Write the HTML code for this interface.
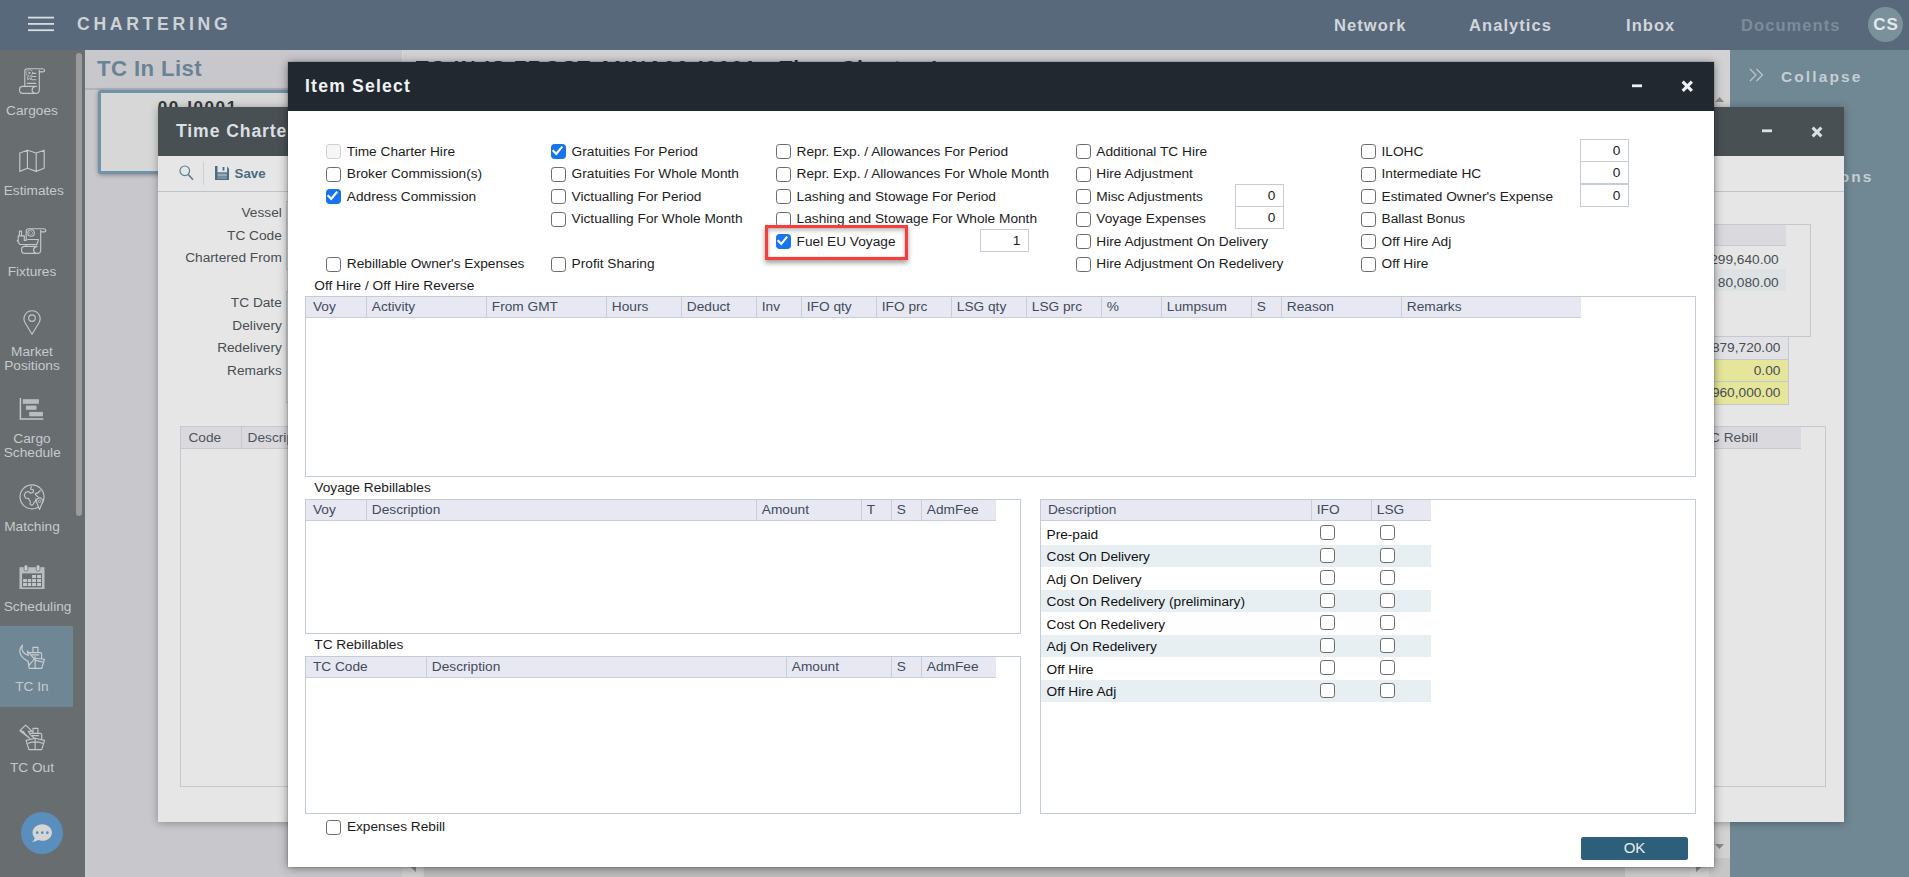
<!DOCTYPE html>
<html lang="en">
<head>
<meta charset="utf-8">
<title>Chartering - Item Select</title>
<style>
*{box-sizing:border-box;margin:0;padding:0}
html,body{width:1909px;height:877px;overflow:hidden}
body{position:relative;font-family:"Liberation Sans",Arial,sans-serif;font-size:13.7px;color:#1a1a1a;background:#c8c8cc}
.abs{position:absolute}
/* ---------- top bar ---------- */
#topbar{position:absolute;left:0;top:0;width:1909px;height:50px;background:#58697b}
#topbar .brand{position:absolute;left:77px;top:13px;font-weight:bold;font-size:17.6px;letter-spacing:3.7px;color:#ced2d7;line-height:22px;white-space:nowrap}
#topbar .nav{position:absolute;top:14px;font-weight:bold;font-size:16.5px;letter-spacing:1.07px;color:#d2d6db;line-height:22px;white-space:nowrap}
#topbar .nav.dim{color:#7d8c9b}
#avatar{position:absolute;left:1868px;top:7px;width:35px;height:35px;border-radius:50%;background:#7a919c;color:#e3e8ec;font-weight:bold;font-size:17px;letter-spacing:1px;text-align:center;line-height:35px;padding-left:1px}
/* ---------- sidebar ---------- */
#sidebar{position:absolute;left:0;top:50px;width:84.7px;height:827px;background:#686d70}
#sidebar .sel{position:absolute;left:0;top:576px;width:73px;height:81px;background:#6f8795}
#sidebar .lbl{position:absolute;left:3.7px;width:56.6px;text-align:center;color:#c6cacd;font-size:13.7px;line-height:13.8px;white-space:nowrap}
#sidebar svg{position:absolute;overflow:visible}
#sidebar .thumb{position:absolute;left:76.3px;top:2.7px;width:5.8px;height:463px;border-radius:3px;background:#9b9b9b}
#chat{position:absolute;left:20.85px;top:761.55px;width:42.5px;height:42.5px;border-radius:50%;background:#5a8fbd}
/* ---------- background page ---------- */
#listpane{position:absolute;left:84.7px;top:50px;width:317.3px;height:827px;background:#c8c8cc}
#listpane h2{position:absolute;left:12.3px;top:5.5px;font-size:22.2px;letter-spacing:.4px;color:#698395;font-weight:bold;line-height:26px;white-space:nowrap}
#listpane .hr{position:absolute;left:0;top:38.2px;width:317.3px;height:1.6px;background:#b2b3b8}
#card{position:absolute;left:98px;top:90px;width:400px;height:83.5px;border:3px solid #7193a8;border-radius:3px;background:#d7d7d7;box-shadow:0 1px 4px rgba(0,0,0,.35)}
#card b{position:absolute;left:56.8px;top:5.4px;font-size:17px;letter-spacing:1.6px;color:#33383c;line-height:20px}
#detail{position:absolute;left:402px;top:50px;width:1328px;height:827px;background:#d2d2d4;border-left:1px solid #d9d9dc}
#detail h1{position:absolute;left:12.7px;top:3.3px;font-size:21px;font-weight:bold;letter-spacing:1.3px;color:#2c3236;line-height:30px;white-space:nowrap}
#vscroll{position:absolute;left:1711.3px;top:88.6px;width:18.7px;height:769px;background:#d2d2d2}
#hscroll{position:absolute;left:402px;top:858.3px;width:1307.3px;height:18.7px;background:#cbcbcb}
#rightpane{position:absolute;left:1730px;top:50px;width:179px;height:827px;background:#708894}
#rightpane .t{position:absolute;font-weight:bold;font-size:15.5px;letter-spacing:2.1px;color:#c4ced4;line-height:20px;white-space:nowrap}
/* ---------- Time Charter dialog (behind) ---------- */
#tc{position:absolute;left:158px;top:107.2px;width:1686.3px;height:714.6px;background:#e6e6e6;box-shadow:0 1px 8px rgba(0,0,0,.32)}
#tc .hd{position:absolute;left:0;top:0;width:100%;height:48.4px;background:#495054}
#tc .hd .ttl{position:absolute;left:18px;top:13px;font-weight:bold;font-size:17.6px;letter-spacing:.9px;color:#dcdfe3;line-height:22px;white-space:nowrap}
#tc .tb{position:absolute;left:0;top:48.4px;width:100%;height:36px;border-bottom:1px solid #bcc3c9}
#tc .fl{position:absolute;right:1562.5px;white-space:nowrap;color:#494e53;line-height:16px}
#tc .box{position:absolute;border:1px solid #c3c9d2}
#tc .th{position:absolute;background:#d9d9de;color:#4f545c;line-height:21px;height:22px;border-bottom:1px solid #c6c9d2}
#tc .num{position:absolute;text-align:right;color:#494e53;line-height:21.5px;height:22.5px;padding-right:8px}
/* ---------- Item Select dialog ---------- */
#dlg{position:absolute;left:288px;top:62px;width:1426.3px;height:805.4px;background:#fff;box-shadow:0 0 1px rgba(0,0,0,.5),0 1px 9px rgba(0,0,0,.45)}
#dlg .hd{position:absolute;left:0;top:0;width:100%;height:48.5px;background:#21282f}
#dlg .hd .ttl{position:absolute;left:17px;top:12.6px;font-weight:bold;font-size:17.6px;letter-spacing:1.2px;color:#f1f2f4;line-height:22px;white-space:nowrap}
.cb{position:absolute;width:15px;height:15px;border:1.6px solid #6b6b6b;border-radius:3.2px;background:#fff}
.cb.on{background:#1574ee;border-color:#1574ee}
.cb.dis{border-color:#cfcfcf;background:#f6f6f6}
.cb svg{position:absolute;left:-1.6px;top:-1.6px;width:15px;height:15px}
.ck{position:absolute;white-space:nowrap;line-height:16px;color:#1c1c1c}
.nb{position:absolute;width:49px;height:23px;border:1px solid #c5ccd6;background:#fff;text-align:right;padding-right:7.6px;line-height:21px;font-size:13.7px;color:#1c1c1c}
.grid{position:absolute;border:1px solid #c3cbd6;background:#fff}
.gh{position:absolute;top:0;height:21px;background:#e8e8f2;border-bottom:1px solid #c9cdd9;border-right:1px solid #c9cdd9;color:#414b5a;line-height:20px;padding-left:5px;white-space:nowrap;overflow:hidden}
.gh.f{padding-left:6.9px}
.gh.l{border-right:0}
.gl{position:absolute;white-space:nowrap;line-height:16px;color:#1c1c1c}
.row{position:absolute;left:0;width:390px;height:22.5px}
.row.alt{background:#e8eff3}
.row span{position:absolute;left:5.5px;top:4.3px;line-height:16px;color:#111;white-space:nowrap}
#ok{position:absolute;left:1293px;top:775px;width:107px;height:23px;border-radius:2.5px;background:#2d5f7b;color:#e6edf1;text-align:center;font-size:15px;line-height:21px}
#hl{position:absolute;left:477px;top:163px;width:143px;height:35px;border:3px solid #f83d3d;background:#fff;box-shadow:0 3px 5px rgba(0,0,0,.38),inset 0 3px 4px rgba(0,0,0,.22),inset 1px 0 2px rgba(0,0,0,.12),inset -1px 0 2px rgba(0,0,0,.12)}
</style>
</head>
<body>

<!-- ================= TOP BAR ================= -->
<div id="topbar">
  <svg class="abs" style="left:28px;top:16px" width="26" height="16" viewBox="0 0 26 16"><g fill="#d8dde2"><rect x="0" y="0.7" width="26" height="1.8"/><rect x="0" y="7" width="26" height="1.8"/><rect x="0" y="13.3" width="26" height="1.8"/></g></svg>
  <div class="brand">CHARTERING</div>
  <div class="nav" style="left:1334px">Network</div>
  <div class="nav" style="left:1469px">Analytics</div>
  <div class="nav" style="left:1626px">Inbox</div>
  <div class="nav dim" style="left:1741px">Documents</div>
  <div id="avatar">CS</div>
</div>

<!-- ================= SIDEBAR ================= -->
<div id="sidebar">
  <div class="sel"></div>
  <div class="thumb"></div>
  <!--SIDEBAR-ICONS-->
  <svg class="abs" style="left:0;top:0" width="85" height="827" viewBox="0 50 85 827">
    <path d="M24.8 86.2 L24.8 71.0 Q24.8 68.7 27.2 68.7 L42.6 68.7 Q44.6 68.8 44.6 70.4 Q44.6 71.9 42.6 71.9 L39.3 71.9 M39.3 70.2 L39.3 89.9 Q39.3 93.4 35.8 93.4 L22.7 93.4 Q19.5 93.4 19.5 89.8 Q19.5 86.3 22.7 86.3 L36.6 86.3 M35.4 86.5 Q32.1 87.1 32.1 89.9 Q32.1 92.8 35.4 93.3 M33.4 73.3 L35.8 73.3 M32.5 76.5 L35.8 76.5 M32.1 79.7 L35.8 79.7 M27.4 83.4 L35.8 83.4" fill="none" stroke="#c3c7ca" stroke-width="1.15" stroke-linejoin="round" stroke-linecap="round"/>
    <circle cx="29.5" cy="72.9" r="3.1" fill="none" stroke="#c3c7ca" stroke-width="1.1" stroke-dasharray="1.1 0.7"/>
    <circle cx="29.5" cy="72.9" r="1.1" fill="#c3c7ca"/>
    <path d="M27.8 76.2 L27.8 79.9 L29.5 78.4 L31.1 79.9 L31.1 76.2" fill="none" stroke="#c3c7ca" stroke-width="1"/>
    <path d="M19.8 153.0 L27.4 150.2 L36.2 153.0 L44.2 150.2 L44.2 168.3 L36.2 171.4 L27.4 168.3 L19.8 171.4 Z M27.4 150.2 L27.4 168.3 M36.2 153.0 L36.2 171.4" fill="none" stroke="#c3c7ca" stroke-width="1.15" stroke-linejoin="round" stroke-linecap="round"/>
    <path d="M26.2 240.1 L26.2 231.0 Q26.2 228.7 28.6 228.7 L43.6 228.7 Q45.8 228.8 45.8 230.4 Q45.8 231.9 43.6 231.9 L40.7 231.9 M40.7 230.2 L40.7 249.9 Q40.7 253.4 37.3 253.4 L24.7 253.4 Q21.5 253.4 21.5 249.8 Q21.5 246.4 24.7 246.4 L37.1 246.4 M36.6 246.6 Q33.6 247.1 33.6 249.9 Q33.6 252.8 36.6 253.3 M19.4 235.6 L19.4 231.1 L21.5 231.1 L21.5 235.6 M18.2 240.5 L18.2 235.8 L24.3 235.8 L24.3 240.4 L26.2 240.4 M27.8 239.5 L38.5 239.5 L36.8 244.5 L19.8 244.5 L17.3 240.6 M26.2 244.5 L26.2 246.2" fill="none" stroke="#c3c7ca" stroke-width="1.15" stroke-linejoin="round" stroke-linecap="round"/>
    <circle cx="31.1" cy="233.0" r="3.3" fill="none" stroke="#c3c7ca" stroke-width="1.1"/>
    <circle cx="31.1" cy="233.0" r="1.5" fill="none" stroke="#c3c7ca" stroke-width="0.9" stroke-dasharray="0.9 0.6"/>
    <path d="M32.0 334.3 L25.1 322.7 A8.0 8.0 0 1 1 39.0 322.7 Z" fill="none" stroke="#c3c7ca" stroke-width="1.15" stroke-linejoin="round" stroke-linecap="round"/>
    <circle cx="32.0" cy="318.1" r="3.3" fill="none" stroke="#c3c7ca" stroke-width="1.15"/>
    <path d="M20.4 397.9 V419.0 H43.4" fill="none" stroke="#c3c7ca" stroke-width="1.5"/>
    <rect x="22.8" y="399.2" width="16.1" height="4.6" fill="#b9bdc1"/>
    <rect x="25.9" y="405.6" width="10.6" height="4.2" fill="#b9bdc1"/>
    <rect x="29.2" y="411.9" width="13.7" height="4.4" fill="#b9bdc1"/>
    <circle cx="32" cy="496.8" r="12" fill="none" stroke="#c3c7ca" stroke-width="1.15" stroke-linejoin="round" stroke-linecap="round"/>
    <path d="M31.3 486.6 L30.6 489.3 L33.4 489.8 L33.4 492.1 L30.7 493.3 L28.4 491.5 L25.6 492.2 L24.3 495.4 L25.6 498.0 L28.4 498.4 L30.2 501.2 L30.1 504.1 L31.7 505.4 L33.4 504.1 L34.2 502.1 L35.5 501.2 L36.0 498.7" fill="none" stroke="#c3c7ca" stroke-width="1.15" stroke-linejoin="round" stroke-linecap="round"/>
    <path d="M40.3 490.5 L38.3 492.6 L35.1 493.9 L36.2 495.5 L38.3 497.1" fill="none" stroke="#c3c7ca" stroke-width="1.15" stroke-linejoin="round" stroke-linecap="round"/>
    <path d="M39.5 509.5 L37.0 503.2 A3.2 3.2 0 1 1 42.1 503.2 Z" fill="#686d70" stroke="#c3c7ca" stroke-width="1.1" stroke-linejoin="round"/>
    <circle cx="39.5" cy="501.4" r="1.2" fill="none" stroke="#c3c7ca" stroke-width="0.9"/>
    <rect x="19.5" y="567.2" width="25.0" height="21.8" fill="#b9bdc1"/>
    <rect x="22.1" y="573.4" width="19.9" height="14.0" fill="#686d70"/>
    <rect x="24.1" y="565.0" width="3.7" height="6.0" rx="1.4" fill="#c9cdd0" stroke="#686d70" stroke-width="0.8"/>
    <rect x="36.2" y="565.0" width="3.7" height="6.0" rx="1.4" fill="#c9cdd0" stroke="#686d70" stroke-width="0.8"/>
    <rect x="32.1" y="575.0" width="3.9" height="3.1" fill="#c3c7ca"/>
    <rect x="37.1" y="575.0" width="3.9" height="3.1" fill="#c3c7ca"/>
    <rect x="23.1" y="579.1" width="3.8" height="3.0" fill="#c3c7ca"/>
    <rect x="27.8" y="579.1" width="3.4" height="3.0" fill="#c3c7ca"/>
    <rect x="32.1" y="579.1" width="3.9" height="3.0" fill="#c3c7ca"/>
    <rect x="37.1" y="579.1" width="3.9" height="3.0" fill="#c3c7ca"/>
    <rect x="23.1" y="583.0" width="3.8" height="3.1" fill="#c3c7ca"/>
    <rect x="27.8" y="583.0" width="3.4" height="3.1" fill="#c3c7ca"/>
    <rect x="32.1" y="583.0" width="3.9" height="3.1" fill="#c3c7ca"/>
    <rect x="37.1" y="583.0" width="3.9" height="3.1" fill="#c3c7ca"/>
    <path d="M22.5 645.2 C16.9 650.9 20.6 657.5 28.2 661.5 L29.0 665.3 L34.4 659.0 L27.5 651.2 L28.2 655.5 C24.3 654.2 20.8 650.9 22.5 645.2 Z M33.0 652.1 L33.0 647.3 L37.9 647.3 L37.9 652.1 M30.1 652.6 L40.3 652.6 Q41.7 652.6 41.7 654.0 L41.7 658.3 M32.1 654.9 L38.7 654.9 M35.1 658.3 L44.5 659.2 L41.7 668.4 L29.2 668.4 L28.1 662.0 M35.1 656.2 L35.1 668.2 M35.8 660.4 L42.6 662.0" fill="none" stroke="#c9cdd0" stroke-width="1.15" stroke-linejoin="round" stroke-linecap="round"/>
    <path d="M19.9 730.7 L25.6 725.2 L32.0 731.2 L28.4 731.4 C29.2 733.8 31.3 736.2 33.8 737.7 M29.7 738.2 C26.8 736.2 24.3 733.8 23.0 731.3 L19.9 730.7 Z M33.0 733.0 L33.0 728.4 L37.9 728.4 L37.9 733.0 M30.7 733.4 L40.3 733.4 Q41.7 733.4 41.7 734.8 L41.7 739.1 M32.1 735.6 L38.7 735.6 M26.0 740.4 L35.1 738.3 L44.6 740.4 L41.7 749.6 L28.9 749.6 L26.0 740.4 M35.1 738.5 L35.1 749.4 M28.2 743.3 Q35.1 740.4 42.6 743.3" fill="none" stroke="#c3c7ca" stroke-width="1.15" stroke-linejoin="round" stroke-linecap="round"/>
  </svg>
  <!--/SIDEBAR-ICONS-->
  <div class="lbl" style="top:53.9px">Cargoes</div>
  <div class="lbl" style="top:133.9px">Estimates</div>
  <div class="lbl" style="top:214.9px">Fixtures</div>
  <div class="lbl" style="top:295.2px">Market<br>Positions</div>
  <div class="lbl" style="top:382.2px">Cargo<br>Schedule</div>
  <div class="lbl" style="top:469.7px">Matching</div>
  <div class="lbl" style="top:549.7px">Scheduling</div>
  <div class="lbl" style="top:629.7px">TC In</div>
  <div class="lbl" style="top:710.7px">TC Out</div>
  <div id="chat"><svg class="abs" style="left:0;top:0" width="42.5" height="42.5" viewBox="20.85 811.55 42.5 42.5"><path d="M42.1 823.8c5.4 0 9.7 3.7 9.7 8.3s-4.3 8.3-9.7 8.3c-1.5 0-2.9-.3-4.200-.8c-1.500 1.100-3.600 1.800-5.900 2.100c1.300-1.200 2.200-2.600 2.600-4.200c-1.400-1.400-2.200-3.300-2.200-5.400c0-4.600 4.300-8.300 9.700-8.300z" fill="#d4d6d6"/><circle cx="37" cy="832.2" r="1.35" fill="#5a8fbd"/><circle cx="42.1" cy="832.2" r="1.35" fill="#5a8fbd"/><circle cx="47.2" cy="832.2" r="1.35" fill="#5a8fbd"/></svg></div>
</div>

<!-- ================= BACKGROUND PAGE ================= -->
<div id="listpane">
  <h2>TC In List</h2>
  <div class="hr"></div>
</div>
<div id="detail"><h1>TC IN IS FROST ANNA00-I0001 : Time Charter In</h1></div>
<div id="card"><b>00-I0001</b></div>
<div id="vscroll">
  <svg class="abs" style="left:3.6px;top:8.8px" width="9" height="5" viewBox="0 0 9 5"><path d="M0 5L4.5 0L9 5z" fill="#8a8a8a"/></svg>
  <svg class="abs" style="left:3.7px;top:755.8px" width="9" height="5" viewBox="0 0 9 5"><path d="M0 0L4.5 5L9 0z" fill="#8a8a8a"/></svg>
</div>
<div id="hscroll">
  <div class="abs" style="left:0;top:0;width:19px;height:18.7px;background:#d0d0d0"></div>
  <svg class="abs" style="left:9px;top:5px" width="5" height="9" viewBox="0 0 5 9"><path d="M5 0L0 4.5L5 9z" fill="#8a8a8a"/></svg>
  <div class="abs" style="left:22px;top:0;width:1201px;height:18.7px;background:#bcbcbc"></div>
  <div class="abs" style="left:1288px;top:0;width:19.3px;height:18.7px;background:#d0d0d0"></div>
  <svg class="abs" style="left:1294.2px;top:5.2px" width="5" height="9" viewBox="0 0 5 9"><path d="M0 0L5 4.5L0 9z" fill="#8a8a8a"/></svg>
</div>
<div class="abs" style="left:1709.3px;top:857.6px;width:20.7px;height:19.4px;background:#c6c6c6"></div>
<div id="rightpane">
  <svg class="abs" style="left:18.5px;top:18px" width="15" height="14" viewBox="0 0 15 14"><path d="M1 1L7 7L1 13M7.5 1L13.5 7L7.5 13" fill="none" stroke="#bfcad1" stroke-width="1.1"/></svg>
  <div class="t" style="left:51px;top:17px">Collapse</div>
  <div class="t" style="left:72px;top:117px">Actions</div>
</div>

<!-- ================= TIME CHARTER DIALOG ================= -->
<div id="tc">
  <div class="hd"><div class="ttl">Time Charter In</div></div>
  <div class="tb"></div>
  <!--TC-BODY-->
  <svg class="abs" style="left:1603.8px;top:22px" width="10" height="4" viewBox="0 0 10 4"><rect x="0" y="0.4" width="10" height="2.8" fill="#dcdfe3"/></svg>
  <svg class="abs" style="left:1652.8px;top:18.4px" width="12" height="12" viewBox="0 0 12 12"><path d="M1.6 1.6L10.4 10.4M10.4 1.6L1.6 10.4" stroke="#dcdfe3" stroke-width="3" fill="none"/></svg>
  <svg class="abs" style="left:21px;top:58px" width="15" height="16" viewBox="0 0 15 16"><circle cx="5.8" cy="5.8" r="4.8" fill="none" stroke="#5c7d94" stroke-width="1.2"/><path d="M9.3 9.6L14 14.8" stroke="#5c7d94" stroke-width="1.6" fill="none"/></svg>
  <div class="abs" style="left:45px;top:55px;width:1px;height:23px;background:#cbd0d4"></div>
  <svg class="abs" style="left:56.9px;top:58.8px" width="14" height="14" viewBox="0 0 14 14"><path d="M0 0h11.6l2.4 2.4v11.6H0z" fill="#4b6d86"/><rect x="2.5" y="0" width="9.6" height="6.3" fill="#e6e6e6"/><rect x="7.6" y="1" width="1.8" height="3.6" fill="#4b6d86"/><rect x="2.5" y="7.6" width="9.3" height="2.7" fill="#98aab8"/><rect x="2.5" y="10.3" width="9.3" height="2.7" fill="#7a8fa0"/></svg>
  <div class="abs" style="left:76.6px;top:58.9px;font-weight:bold;color:#4a6b82;font-size:13.3px;line-height:16px">Save</div>
  <div class="fl" style="top:97.7px">Vessel</div>
  <div class="fl" style="top:120.5px">TC Code</div>
  <div class="fl" style="top:143px">Chartered From</div>
  <div class="fl" style="top:187.5px">TC Date</div>
  <div class="fl" style="top:210.5px">Delivery</div>
  <div class="fl" style="top:233px">Redelivery</div>
  <div class="fl" style="top:255.5px">Remarks</div>
  <div class="abs" style="left:127.5px;top:94.3px;width:400px;height:68.2px;border:1px solid #c3c9d2;background:#eaeaea"></div>
  <div class="abs" style="left:127.5px;top:183.4px;width:400px;height:112.7px;border:1px solid #c3c9d2;background:#eaeaea"></div>
  <div class="box" style="left:22.4px;top:319.1px;width:1645.4px;height:360.3px"></div>
  <div class="th" style="left:23.4px;top:320.1px;width:60.6px;padding-left:7px;border-right:1px solid #c6c9d2">Code</div>
  <div class="th" style="left:84px;top:320.1px;width:1559.2px;padding-left:5.6px">Description</div>
  <div class="th" style="left:1520px;top:320.1px;width:123.2px;padding-left:22.7px;border-left:1px solid #c6c9d2">TC Rebill</div>
  <div class="box" style="left:1400px;top:117.1px;width:252.6px;height:113px"></div>
  <div class="th" style="left:1401px;top:118.1px;width:227px;height:20.5px"></div>
  <div class="num" style="left:1401.7px;top:142px;width:227px">299,640.00</div>
  <div class="abs" style="left:1401px;top:162.3px;width:227px;height:22px;background:#dde2e5"></div>
  <div class="num" style="left:1401.7px;top:164.7px;width:227px">80,080.00</div>
  <div class="num" style="left:1400px;top:229.1px;width:230.7px;border:1px solid #c3c9d2;background:#e2e2e6;height:23.5px;padding-right:7.3px">879,720.00</div>
  <div class="num" style="left:1400px;top:251.6px;width:230.7px;border:1px solid #c3c9d2;background:#e6e69b;height:23.5px;padding-right:7.3px">0.00</div>
  <div class="num" style="left:1400px;top:274.1px;width:230.7px;border:1px solid #c3c9d2;background:#e6e69b;height:23.5px;padding-right:7.3px">960,000.00</div>
  <!--/TC-BODY-->
</div>

<!-- ================= ITEM SELECT DIALOG ================= -->
<div id="dlg">
  <div class="hd"><div class="ttl">Item Select</div></div>
  <!--DLG-BODY-->
  <svg class="abs" style="left:1344px;top:21.5px" width="10" height="4" viewBox="0 0 10 4"><rect x="0" y="0.4" width="10" height="2.8" fill="#eef0f2"/></svg>
  <svg class="abs" style="left:1392.5px;top:18.3px" width="12.6" height="12.6" viewBox="0 0 12 12"><path d="M1.6 1.6L10.4 10.4M10.4 1.6L1.6 10.4" stroke="#eef0f2" stroke-width="3" stroke-linecap="butt" fill="none"/></svg>
  <div class="cb dis" style="left:38px;top:82px"></div>
  <div class="ck" style="left:58.8px;top:81.7px">Time Charter Hire</div>
  <div class="cb" style="left:38px;top:105px"></div>
  <div class="ck" style="left:58.8px;top:104.2px">Broker Commission(s)</div>
  <div class="cb on" style="left:38px;top:127px"><svg viewBox="0 0 14 14"><path d="M3.2 7.4l2.6 2.7 5-6" fill="none" stroke="#fff" stroke-width="2" stroke-linecap="square"/></svg></div>
  <div class="ck" style="left:58.8px;top:126.7px">Address Commission</div>
  <div class="cb" style="left:38px;top:195px"></div>
  <div class="ck" style="left:58.8px;top:194.2px">Rebillable Owner's Expenses</div>
  <div class="cb on" style="left:263px;top:82px"><svg viewBox="0 0 14 14"><path d="M3.2 7.4l2.6 2.7 5-6" fill="none" stroke="#fff" stroke-width="2" stroke-linecap="square"/></svg></div>
  <div class="ck" style="left:283.6px;top:81.7px">Gratuities For Period</div>
  <div class="cb" style="left:263px;top:105px"></div>
  <div class="ck" style="left:283.6px;top:104.2px">Gratuities For Whole Month</div>
  <div class="cb" style="left:263px;top:127px"></div>
  <div class="ck" style="left:283.6px;top:126.7px">Victualling For Period</div>
  <div class="cb" style="left:263px;top:150px"></div>
  <div class="ck" style="left:283.6px;top:149.2px">Victualling For Whole Month</div>
  <div class="cb" style="left:263px;top:195px"></div>
  <div class="ck" style="left:283.6px;top:194.2px">Profit Sharing</div>
  <div class="cb" style="left:488px;top:82px"></div>
  <div class="ck" style="left:508.6px;top:81.7px">Repr. Exp. / Allowances For Period</div>
  <div class="cb" style="left:488px;top:105px"></div>
  <div class="ck" style="left:508.6px;top:104.2px">Repr. Exp. / Allowances For Whole Month</div>
  <div class="cb" style="left:488px;top:127px"></div>
  <div class="ck" style="left:508.6px;top:126.7px">Lashing and Stowage For Period</div>
  <div class="cb" style="left:488px;top:150px"></div>
  <div class="ck" style="left:508.6px;top:149.2px">Lashing and Stowage For Whole Month</div>
  <div id="hl"></div>
  <div class="cb on" style="left:488px;top:172px"><svg viewBox="0 0 14 14"><path d="M3.2 7.4l2.6 2.7 5-6" fill="none" stroke="#fff" stroke-width="2" stroke-linecap="square"/></svg></div>
  <div class="ck" style="left:508.6px;top:171.7px">Fuel EU Voyage</div>
  <div class="cb" style="left:788px;top:82px"></div>
  <div class="ck" style="left:808.3px;top:81.7px">Additional TC Hire</div>
  <div class="cb" style="left:788px;top:105px"></div>
  <div class="ck" style="left:808.3px;top:104.2px">Hire Adjustment</div>
  <div class="cb" style="left:788px;top:127px"></div>
  <div class="ck" style="left:808.3px;top:126.7px">Misc Adjustments</div>
  <div class="cb" style="left:788px;top:150px"></div>
  <div class="ck" style="left:808.3px;top:149.2px">Voyage Expenses</div>
  <div class="cb" style="left:788px;top:172px"></div>
  <div class="ck" style="left:808.3px;top:171.7px">Hire Adjustment On Delivery</div>
  <div class="cb" style="left:788px;top:195px"></div>
  <div class="ck" style="left:808.3px;top:194.2px">Hire Adjustment On Redelivery</div>
  <div class="cb" style="left:1073px;top:82px"></div>
  <div class="ck" style="left:1093.5px;top:81.7px">ILOHC</div>
  <div class="cb" style="left:1073px;top:105px"></div>
  <div class="ck" style="left:1093.5px;top:104.2px">Intermediate HC</div>
  <div class="cb" style="left:1073px;top:127px"></div>
  <div class="ck" style="left:1093.5px;top:126.7px">Estimated Owner's Expense</div>
  <div class="cb" style="left:1073px;top:150px"></div>
  <div class="ck" style="left:1093.5px;top:149.2px">Ballast Bonus</div>
  <div class="cb" style="left:1073px;top:172px"></div>
  <div class="ck" style="left:1093.5px;top:171.7px">Off Hire Adj</div>
  <div class="cb" style="left:1073px;top:195px"></div>
  <div class="ck" style="left:1093.5px;top:194.2px">Off Hire</div>
  <div class="nb" style="left:692px;top:167px">1</div>
  <div class="nb" style="left:947px;top:122px">0</div>
  <div class="nb" style="left:947px;top:144px">0</div>
  <div class="nb" style="left:1292px;top:77px">0</div>
  <div class="nb" style="left:1292px;top:99px">0</div>
  <div class="nb" style="left:1292px;top:122px">0</div>
  <div class="gl" style="left:26.3px;top:215.6px">Off Hire / Off Hire Reverse</div>
  <div class="gl" style="left:26.3px;top:417.5px">Voyage Rebillables</div>
  <div class="gl" style="left:26.3px;top:575.3px">TC Rebillables</div>
  <div class="grid" style="left:17px;top:234px;width:1391px;height:181px"><div class="gh f" style="left:0px;width:60.8px">Voy</div><div class="gh" style="left:60.8px;width:120px">Activity</div><div class="gh" style="left:180.8px;width:120px">From GMT</div><div class="gh" style="left:300.8px;width:75px">Hours</div><div class="gh" style="left:375.8px;width:75px">Deduct</div><div class="gh" style="left:450.8px;width:45px">Inv</div><div class="gh" style="left:495.8px;width:75px">IFO qty</div><div class="gh" style="left:570.8px;width:75px">IFO prc</div><div class="gh" style="left:645.8px;width:75px">LSG qty</div><div class="gh" style="left:720.8px;width:75px">LSG prc</div><div class="gh" style="left:795.8px;width:60px">%</div><div class="gh" style="left:855.8px;width:90px">Lumpsum</div><div class="gh" style="left:945.8px;width:30px">S</div><div class="gh" style="left:975.8px;width:120px">Reason</div><div class="gh l" style="left:1095.8px;width:179.2px">Remarks</div></div>
  <div class="grid" style="left:17px;top:437px;width:716px;height:135px"><div class="gh f" style="left:0px;width:60.8px">Voy</div><div class="gh" style="left:60.8px;width:390px">Description</div><div class="gh" style="left:450.8px;width:105px">Amount</div><div class="gh" style="left:555.8px;width:30px">T</div><div class="gh" style="left:585.8px;width:30px">S</div><div class="gh l" style="left:615.8px;width:74.2px">AdmFee</div></div>
  <div class="grid" style="left:17px;top:594px;width:716px;height:158px"><div class="gh f" style="left:0px;width:120.8px">TC Code</div><div class="gh" style="left:120.8px;width:360px">Description</div><div class="gh" style="left:480.8px;width:105px">Amount</div><div class="gh" style="left:585.8px;width:30px">S</div><div class="gh l" style="left:615.8px;width:74.2px">AdmFee</div></div>
  <div class="grid" style="left:752px;top:437px;width:656px;height:315px"><div class="gh f" style="left:0px;width:270.8px">Description</div><div class="gh" style="left:270.8px;width:60px">IFO</div><div class="gh l" style="left:330.8px;width:59.2px">LSG</div><div class="row" style="top:22.4px"><span>Pre-paid</span><div class="cb" style="left:279px;top:2.6px"></div><div class="cb" style="left:339px;top:2.6px"></div></div><div class="row alt" style="top:44.9px"><span>Cost On Delivery</span><div class="cb" style="left:279px;top:3.1px"></div><div class="cb" style="left:339px;top:3.1px"></div></div><div class="row" style="top:67.4px"><span>Adj On Delivery</span><div class="cb" style="left:279px;top:2.6px"></div><div class="cb" style="left:339px;top:2.6px"></div></div><div class="row alt" style="top:89.9px"><span>Cost On Redelivery (preliminary)</span><div class="cb" style="left:279px;top:3.1px"></div><div class="cb" style="left:339px;top:3.1px"></div></div><div class="row" style="top:112.4px"><span>Cost On Redelivery</span><div class="cb" style="left:279px;top:2.6px"></div><div class="cb" style="left:339px;top:2.6px"></div></div><div class="row alt" style="top:134.9px"><span>Adj On Redelivery</span><div class="cb" style="left:279px;top:3.1px"></div><div class="cb" style="left:339px;top:3.1px"></div></div><div class="row" style="top:157.4px"><span>Off Hire</span><div class="cb" style="left:279px;top:2.6px"></div><div class="cb" style="left:339px;top:2.6px"></div></div><div class="row alt" style="top:179.9px"><span>Off Hire Adj</span><div class="cb" style="left:279px;top:3.1px"></div><div class="cb" style="left:339px;top:3.1px"></div></div></div>
  <div class="cb" style="left:38px;top:758px"></div>
  <div class="ck" style="left:58.9px;top:756.8px">Expenses Rebill</div>
  <!--/DLG-BODY-->
  <div id="ok">OK</div>
</div>

</body>
</html>
